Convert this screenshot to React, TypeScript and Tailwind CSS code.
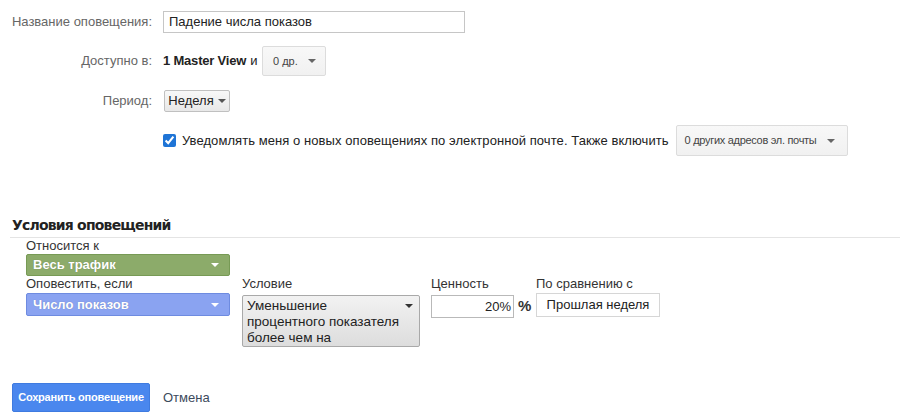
const Caret = ({ className = 'border-t-[#666]' }: { className?: string }) => (
  <span className={`inline-block w-0 h-0 border-l-[4px] border-r-[4px] border-t-[4px] border-l-transparent border-r-transparent ${className}`} />
)

export default function App() {
  return (
    <div className="w-[900px] h-[418px] bg-white text-[13px] text-[#333] font-['Liberation_Sans',Arial,sans-serif] overflow-hidden">
      {/* Alert settings */}
      <div className="flex flex-col pt-[11px]">
        <div className="flex items-center">
          <div className="w-[152px] text-right text-[#666]">Название оповещения:</div>
          <div className="ml-[11px] w-[302px] h-[22px] border border-[#c6c6c6] flex items-center px-[5px] text-[#222]">
            Падение числа показов
          </div>
        </div>

        <div className="flex items-center mt-[13px]">
          <div className="w-[152px] text-right text-[#666]">Доступно в:</div>
          <div className="ml-[11px] font-bold text-[#222] tracking-[-0.2px]">1 Master View</div>
          <div className="ml-[4px] text-[#222]">и</div>
          <button className="ml-[5px] w-[64px] h-[30px] border border-[#dcdcdc] rounded-[2px] bg-gradient-to-b from-[#f8f8f8] to-[#f1f1f1] flex items-center justify-center gap-[10px] text-[11px] text-[#444]">
            <span>0 др.</span>
            <Caret />
          </button>
        </div>

        <div className="flex items-center mt-[14px]">
          <div className="w-[152px] text-right text-[#666]">Период:</div>
          <button className="ml-[12px] w-[66px] h-[22px] border border-[#c0c0c0] rounded-[2px] bg-gradient-to-b from-[#f8f8f8] to-[#e8e8e8] flex items-center justify-center gap-[4px] text-[13px] text-[#222]">
            <span>Неделя</span>
            <Caret className="border-t-[#555]" />
          </button>
        </div>

        <div className="flex items-center mt-[13px] ml-[163px]">
          <input type="checkbox" defaultChecked className="w-[13px] h-[13px] m-0 accent-[#1e74d6]" />
          <span className="ml-[6px] text-[#222] tracking-[0.07px]">Уведомлять меня о новых оповещениях по электронной почте. Также включить</span>
          <button className="ml-[7px] w-[172px] h-[31px] border border-[#dcdcdc] rounded-[2px] bg-gradient-to-b from-[#f8f8f8] to-[#f1f1f1] flex items-center justify-between pl-[8px] pr-[12px] text-[11px] text-[#444] tracking-[-0.3px]">
            <span>0 других адресов эл. почты</span>
            <Caret />
          </button>
        </div>
      </div>

      {/* Conditions */}
      <div className="mt-[59px] pl-[12px] font-['DejaVu_Sans',Verdana,sans-serif] text-[14px] font-bold text-[#222] tracking-[-0.8px]">
        Условия оповещений
      </div>
      <div className="ml-[10px] mt-[1px] border-t border-[#e4e4e4]" />

      <div className="pl-[26px] flex flex-col">
        <div className="leading-[16px] text-[#333]">Относится к</div>
        <button className="w-[204px] h-[22px] rounded-[2px] border border-[#779a55] bg-[#8cab6a] flex items-center justify-between pl-[6px] pr-[10px] text-white font-bold text-[13px] [text-shadow:0_0_1px_rgba(0,0,0,0.25)]">
          <span>Весь трафик</span>
          <Caret className="border-t-white" />
        </button>

        <div className="flex items-start">
          <div className="flex flex-col w-[216px]">
            <div className="leading-[16px] text-[#333]">Оповестить, если</div>
            <button className="mt-[1px] w-[204px] h-[23px] rounded-[2px] border border-[#6e8be0] bg-[#8aa3f1] flex items-center justify-between pl-[6px] pr-[10px] text-white font-bold text-[13px] [text-shadow:0_0_1px_rgba(0,0,0,0.25)]">
              <span>Число показов</span>
              <Caret className="border-t-white" />
            </button>
          </div>

          <div className="flex flex-col w-[189px]">
            <div className="leading-[16px] text-[#333]">Условие</div>
            <div className="mt-[3px] w-[178px] h-[52px] border border-[#a9a9a9] rounded-[2px] bg-gradient-to-b from-[#f2f2f2] to-[#dddddd] flex items-start justify-between pl-[4px] pr-[6px] pt-[2px]">
              <span className="text-left leading-[16px] text-[13.5px] text-[#222]">
                Уменьшение<br />процентного показателя<br />более чем на
              </span>
              <span className="mt-[6px] flex"><Caret className="border-t-[#333]" /></span>
            </div>
          </div>

          <div className="flex flex-col w-[107px]">
            <div className="leading-[16px] text-[#333]">Ценность</div>
            <div className="mt-[3px] flex items-center">
              <div className="w-[83px] h-[23px] border border-[#b9b9b9] flex items-center justify-end pr-[2px] text-[#222]">20%</div>
              <span className="ml-[4px] font-bold text-[15px] text-[#333]">%</span>
            </div>
          </div>

          <div className="flex flex-col -ml-[2px]">
            <div className="leading-[16px] text-[#333]">По сравнению с</div>
            <div className="mt-[1px] w-[124px] h-[24px] border border-[#d6d6d6] flex items-center justify-center text-[#222]">
              Прошлая неделя
            </div>
          </div>
        </div>
      </div>

      {/* Actions */}
      <div className="flex items-center mt-[36px] pl-[12px]">
        <button className="w-[138px] h-[29px] rounded-[2px] bg-[#4a87ee] border border-[#3f7be0] text-white font-bold text-[11px] tracking-[-0.2px]">
          Сохранить оповещение
        </button>
        <span className="ml-[13px] text-[#3c4a5c]">Отмена</span>
      </div>
    </div>
  )
}
